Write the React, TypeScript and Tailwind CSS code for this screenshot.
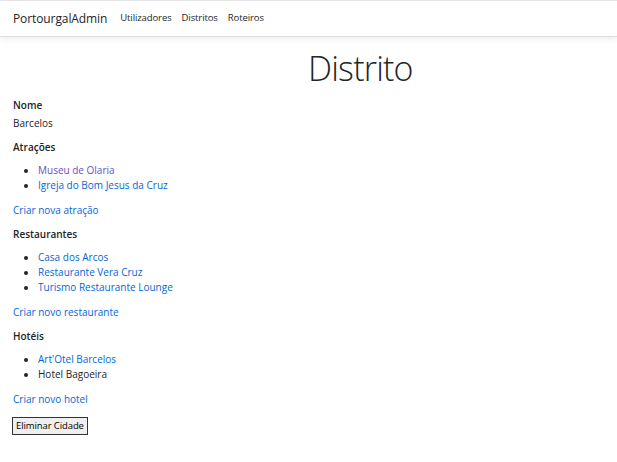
import React from "react";

const font = { fontFamily: '"Open Sans", "Noto Sans", sans-serif' };

function Section({ title, items, link }: { title: string; items: { t: string; c?: string }[]; link: string }) {
  return (
    <div>
      <div className="font-semibold text-[10px] leading-[15px] text-[#212529] mt-[9px]">{title}</div>
      <ul className="list-disc pl-[25px] mt-[8px] mb-[10px] text-[10px] leading-[15px] marker:text-[#212529]">
        {items.map((it) => (
          <li key={it.t}>
            <span className={it.c ?? "text-[#0366d6]"}>{it.t}</span>
          </li>
        ))}
      </ul>
      <div className="text-[10px] leading-[15px] text-[#0366d6]">{link}</div>
    </div>
  );
}

export default function App() {
  return (
    <div className="w-[617px] h-[462px] bg-white text-[#212529] overflow-hidden" style={font}>
      <div className="h-[37px] border-t border-t-[#e5e5e5] border-b border-b-[#dcdcdc] shadow-[0_3px_6px_rgba(0,0,0,0.06)] flex items-center px-[13px]">
        <span className="text-[12px] text-[#212529] mr-[13px] tracking-[-0.1px]">PortourgalAdmin</span>
        <nav className="flex gap-[10px] text-[9.5px] text-[#212529] tracking-[-0.1px]">
          <span>Utilizadores</span>
          <span>Distritos</span>
          <span>Roteiros</span>
        </nav>
      </div>
      <div className="px-[13px]">
        <h1 className="text-[34px] font-light leading-[40px] mt-[11px] text-[#212529] pl-[295px] tracking-[-0.8px]">Distrito</h1>
        <div className="mt-[10px] font-semibold text-[10px] leading-[15px]">Nome</div>
        <div className="mt-[3px] text-[10px] leading-[15px]">Barcelos</div>
        <Section
          title="Atrações"
          items={[{ t: "Museu de Olaria", c: "text-[#6a4fc4]" }, { t: "Igreja do Bom Jesus da Cruz" }]}
          link="Criar nova atração"
        />
        <Section
          title="Restaurantes"
          items={[{ t: "Casa dos Arcos" }, { t: "Restaurante Vera Cruz" }, { t: "Turismo Restaurante Lounge" }]}
          link="Criar novo restaurante"
        />
        <Section
          title="Hotéis"
          items={[{ t: "Art'Otel Barcelos" }, { t: "Hotel Bagoeira", c: "text-[#212529]" }]}
          link="Criar novo hotel"
        />
        <button className="mt-[10px] ml-[-1px] h-[18px] border border-[#333] bg-[#efefef] text-black text-[9.5px] leading-[14px] px-[3px] py-0 tracking-[-0.1px]">
          Eliminar Cidade
        </button>
      </div>
    </div>
  );
}
